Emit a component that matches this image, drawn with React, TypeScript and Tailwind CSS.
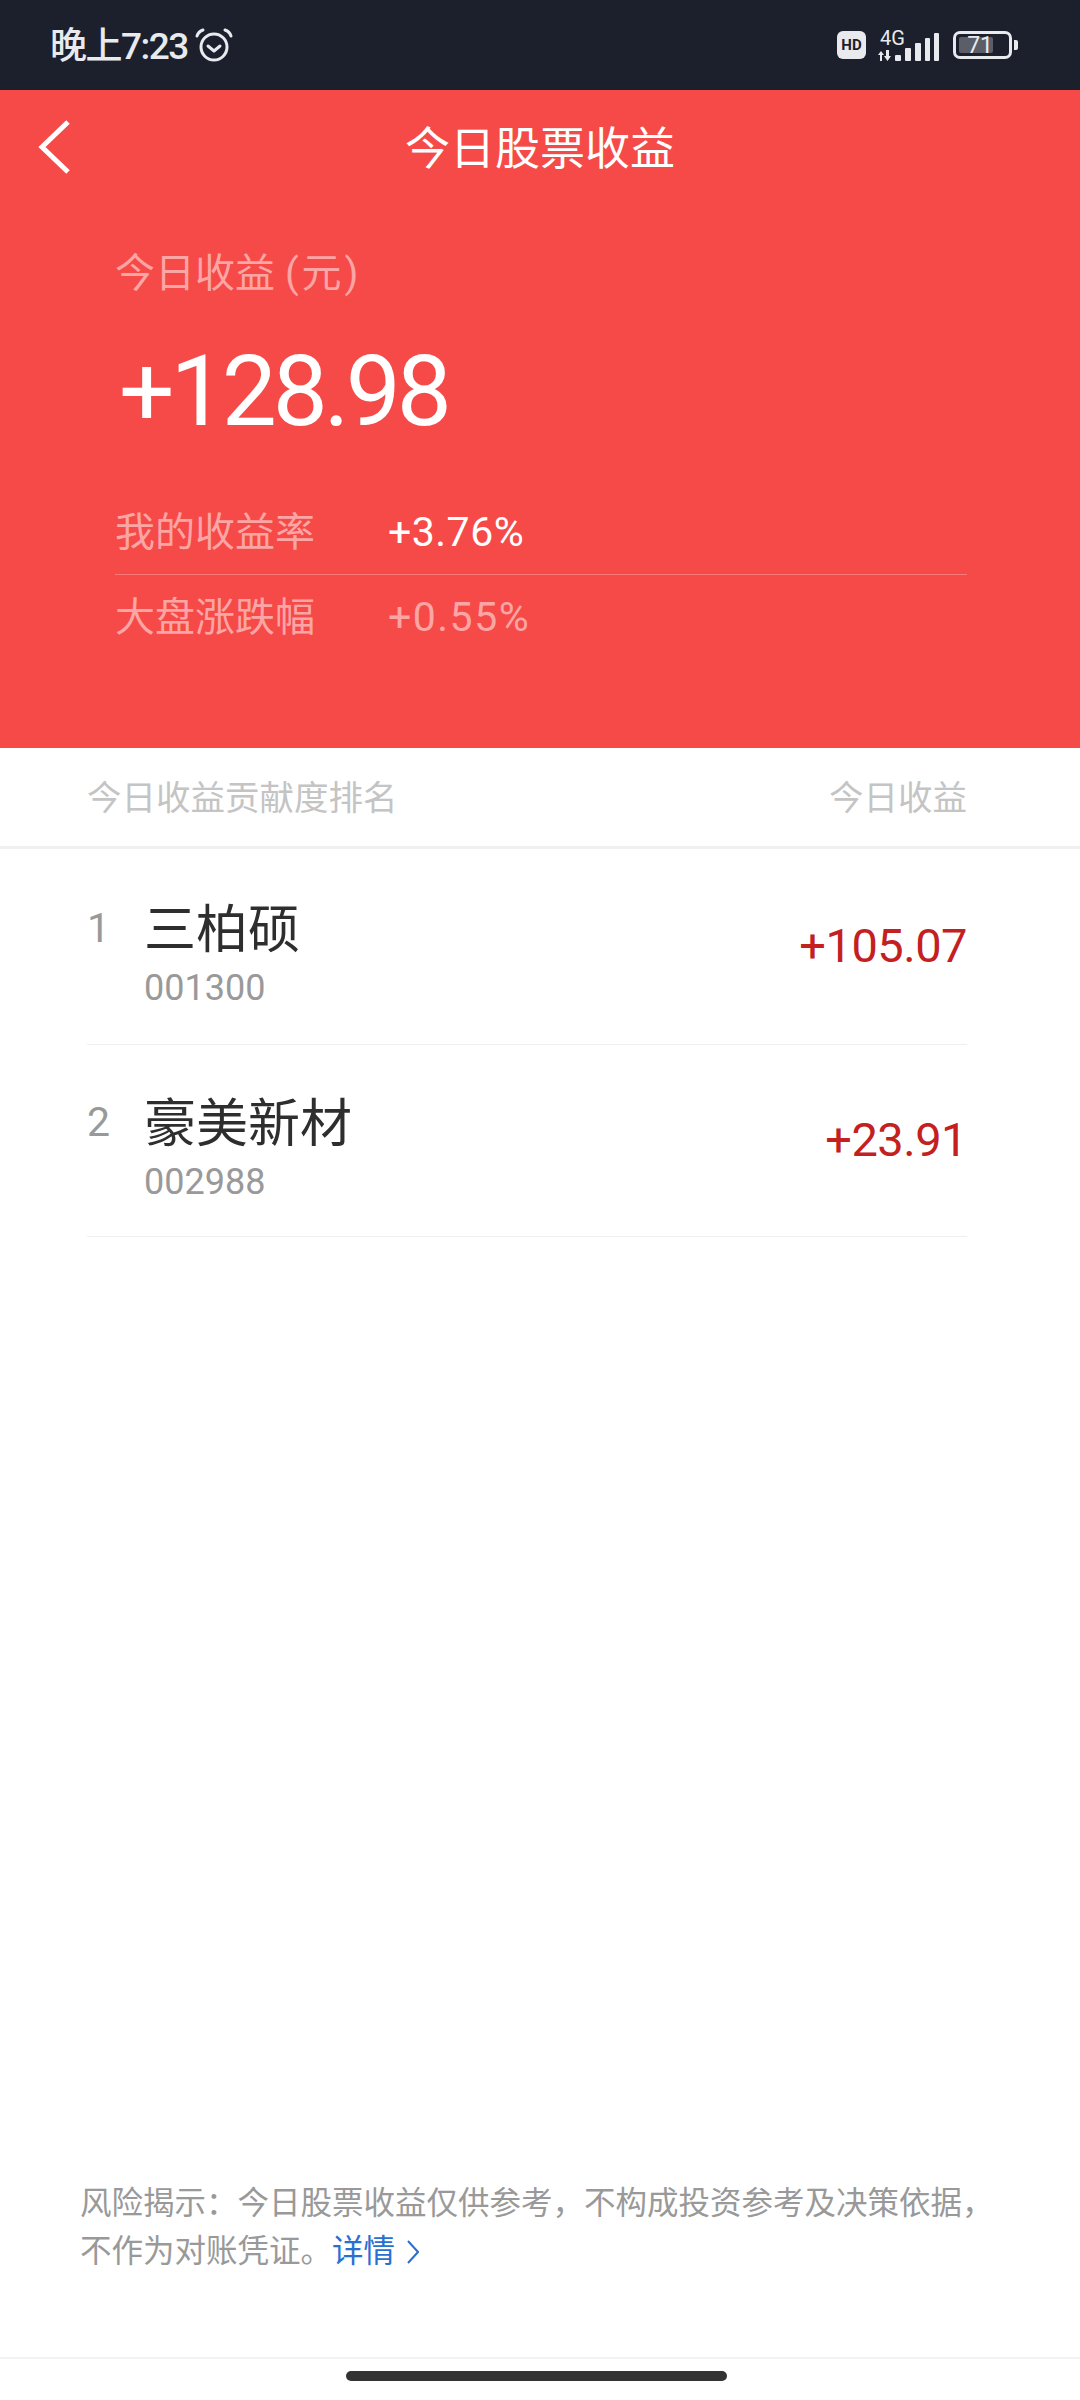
const font = "font-['Roboto','Noto_Sans_CJK_SC',sans-serif]";

const riskLine = '风险揭示\uff1a今日股票收益仅供参考\uff0c不构成投资参考及决策依据\uff0c';

const StatusBar = () => {
  return (
    <div className="flex h-[90px] items-center justify-between bg-[#1c202d] pl-[50px] pr-[62px] text-[#e8eaee]">
      <div className="flex items-center gap-[7px]">
        <span className="pt-[2px] text-[37px] font-medium leading-none tracking-[-1.500px]">晚上7:23</span>
        <svg width="38" height="36" viewBox="0 0 38 36" fill="none" stroke="currentColor" strokeWidth="3" strokeLinecap="round" strokeLinejoin="round">
          <circle cx="19" cy="20" r="13" />
          <path d="M13 19l6 5 6-5" />
          <path d="M2 9c1-3 3-5 6-6" />
          <path d="M36 9c-1-3-3-5-6-6" />
        </svg>
      </div>
      <div className="flex items-center">
        <div className="flex h-[28px] w-[29px] items-center justify-center rounded-[6px] bg-[#e8eaee] text-[15px] font-bold leading-none text-[#1c202d]">HD</div>
        <div className="relative ml-[12px] h-[34px] w-[62px]">
          <span className="absolute left-[2px] top-0 text-[20px] leading-[20px]">4G</span>
          <svg className="absolute left-0 top-0" width="62" height="34" viewBox="0 0 62 34" fill="currentColor">
            <path d="M0 27h6l-3-4zM2 27h2v6H2zM8 22h3v6h2l-3.500 5-3.500-5h2z" />
            <rect x="17" y="27" width="6" height="6" rx="1" />
            <rect x="27" y="20" width="6" height="13" rx="1" />
            <rect x="37" y="15" width="6" height="18" rx="1" />
            <rect x="47" y="10" width="5" height="23" rx="1" />
            <rect x="56" y="5" width="5" height="28" rx="1" />
          </svg>
        </div>
        <div className="ml-[13px] flex h-[28px] w-[59px] items-center rounded-[7px] border-[3px] border-[#e8eaee] p-[3px]">
          <div className="flex h-full w-[34px] items-center justify-end rounded-[2px] bg-[#5b5e68] text-[23px] leading-none">71</div>
        </div>
        <div className="ml-[2px] h-[10px] w-[4px] rounded-r-[2px] bg-[#e8eaee]" />
      </div>
    </div>
  );
};

const Hero = () => {
  return (
    <div className="h-[658px] bg-[#f64a48] pl-[115px] pr-[113px] text-white">
      <div className="relative -ml-[115px] -mr-[113px] flex h-[114px] items-center justify-center">
        <svg className="absolute left-[36px] top-[29px]" width="36" height="56" viewBox="0 0 36 56" fill="none" stroke="currentColor" strokeWidth="5">
          <path d="M32 3 L6 28 L32 53" />
        </svg>
        <span className="pt-[4px] text-[45px] leading-none">今日股票收益</span>
      </div>
      <div className="mt-[40px] text-[40px] leading-[60px] text-[#fba5a4]">
        今日收益 <span className="tracking-[3px]">(元)</span>
      </div>
      <div className="mt-[28px] pl-[4px] text-[98px] leading-[120px] tracking-[-4px]">+128.98</div>
      <div className="mt-[35px] flex h-[88px] items-center border-b border-[#fb7a79] pt-[4px]">
        <span className="w-[273px] text-[40px] text-[#fba5a4]">我的收益率</span>
        <span className="text-[41px] tracking-[0.500px] text-white">+3.76%</span>
      </div>
      <div className="flex h-[84px] items-center pt-[2px]">
        <span className="w-[273px] text-[40px] text-[#fba5a4]">大盘涨跌幅</span>
        <span className="text-[41px] tracking-[1.500px] text-[#fba5a4]">+0.55%</span>
      </div>
    </div>
  );
};

const rows = [
  { rank: '1', name: '三柏硕', code: '001300', amount: '+105.07', height: 'h-[196px]' },
  { rank: '2', name: '豪美新材', code: '002988', amount: '+23.91', height: 'h-[192px]' },
];

const StockRow = ({ rank, name, code, amount, height }: (typeof rows)[number]) => {
  return (
    <div className={`flex ${height} items-center justify-between border-b border-[#efefef]`}>
      <div className="flex items-start pt-[17px]">
        <span className="w-[57px] text-[41px] leading-[54px] text-[#999999]">{rank}</span>
        <div>
          <div className="text-[52px] leading-[60px] text-[#2e2e2e]">{name}</div>
          <div className="mt-[5px] text-[36px] leading-[44px] text-[#999999]">{code}</div>
        </div>
      </div>
      <span className="mb-[2px] text-[47px] leading-none tracking-[-0.500px] text-[#c3201f]">{amount}</span>
    </div>
  );
};

export default function App() {
  return (
    <div className={`flex h-[2400px] w-[1080px] flex-col bg-white ${font}`}>
      <StatusBar />
      <Hero />
      <div className="flex h-[101px] items-center justify-between border-b-[3px] border-[#f0f0f0] px-[87px] pt-[3px] text-[34.500px] leading-none text-[#c4c4c4]">
        <span>今日收益贡献度排名</span>
        <span className="pr-[26px]">今日收益</span>
      </div>
      <div className="pl-[87px] pr-[113px]">
        {rows.map((row) => (
          <StockRow key={row.rank} {...row} />
        ))}
      </div>
      <div className="mt-auto pl-[80px] pr-[60px] text-[31.500px] leading-[48px] text-[#999999]">
        <div className="whitespace-nowrap">{riskLine}</div>
        <div className="flex items-center">
          不作为对账凭证。<span className="text-[#2a6fd0]">详情</span>
          <svg className="ml-[12px]" width="12" height="26" viewBox="0 0 12 26" fill="none" stroke="#2a6fd0" strokeWidth="2">
            <path d="M1 2 L11 13 L1 24" />
          </svg>
        </div>
      </div>
      <div className="mt-[81px] flex h-[43px] justify-center border-t-2 border-[#f2f2f2] pt-[12px]">
        <div className="ml-[-7px] h-[10px] w-[381px] rounded-full bg-[#333333]" />
      </div>
    </div>
  );
}
